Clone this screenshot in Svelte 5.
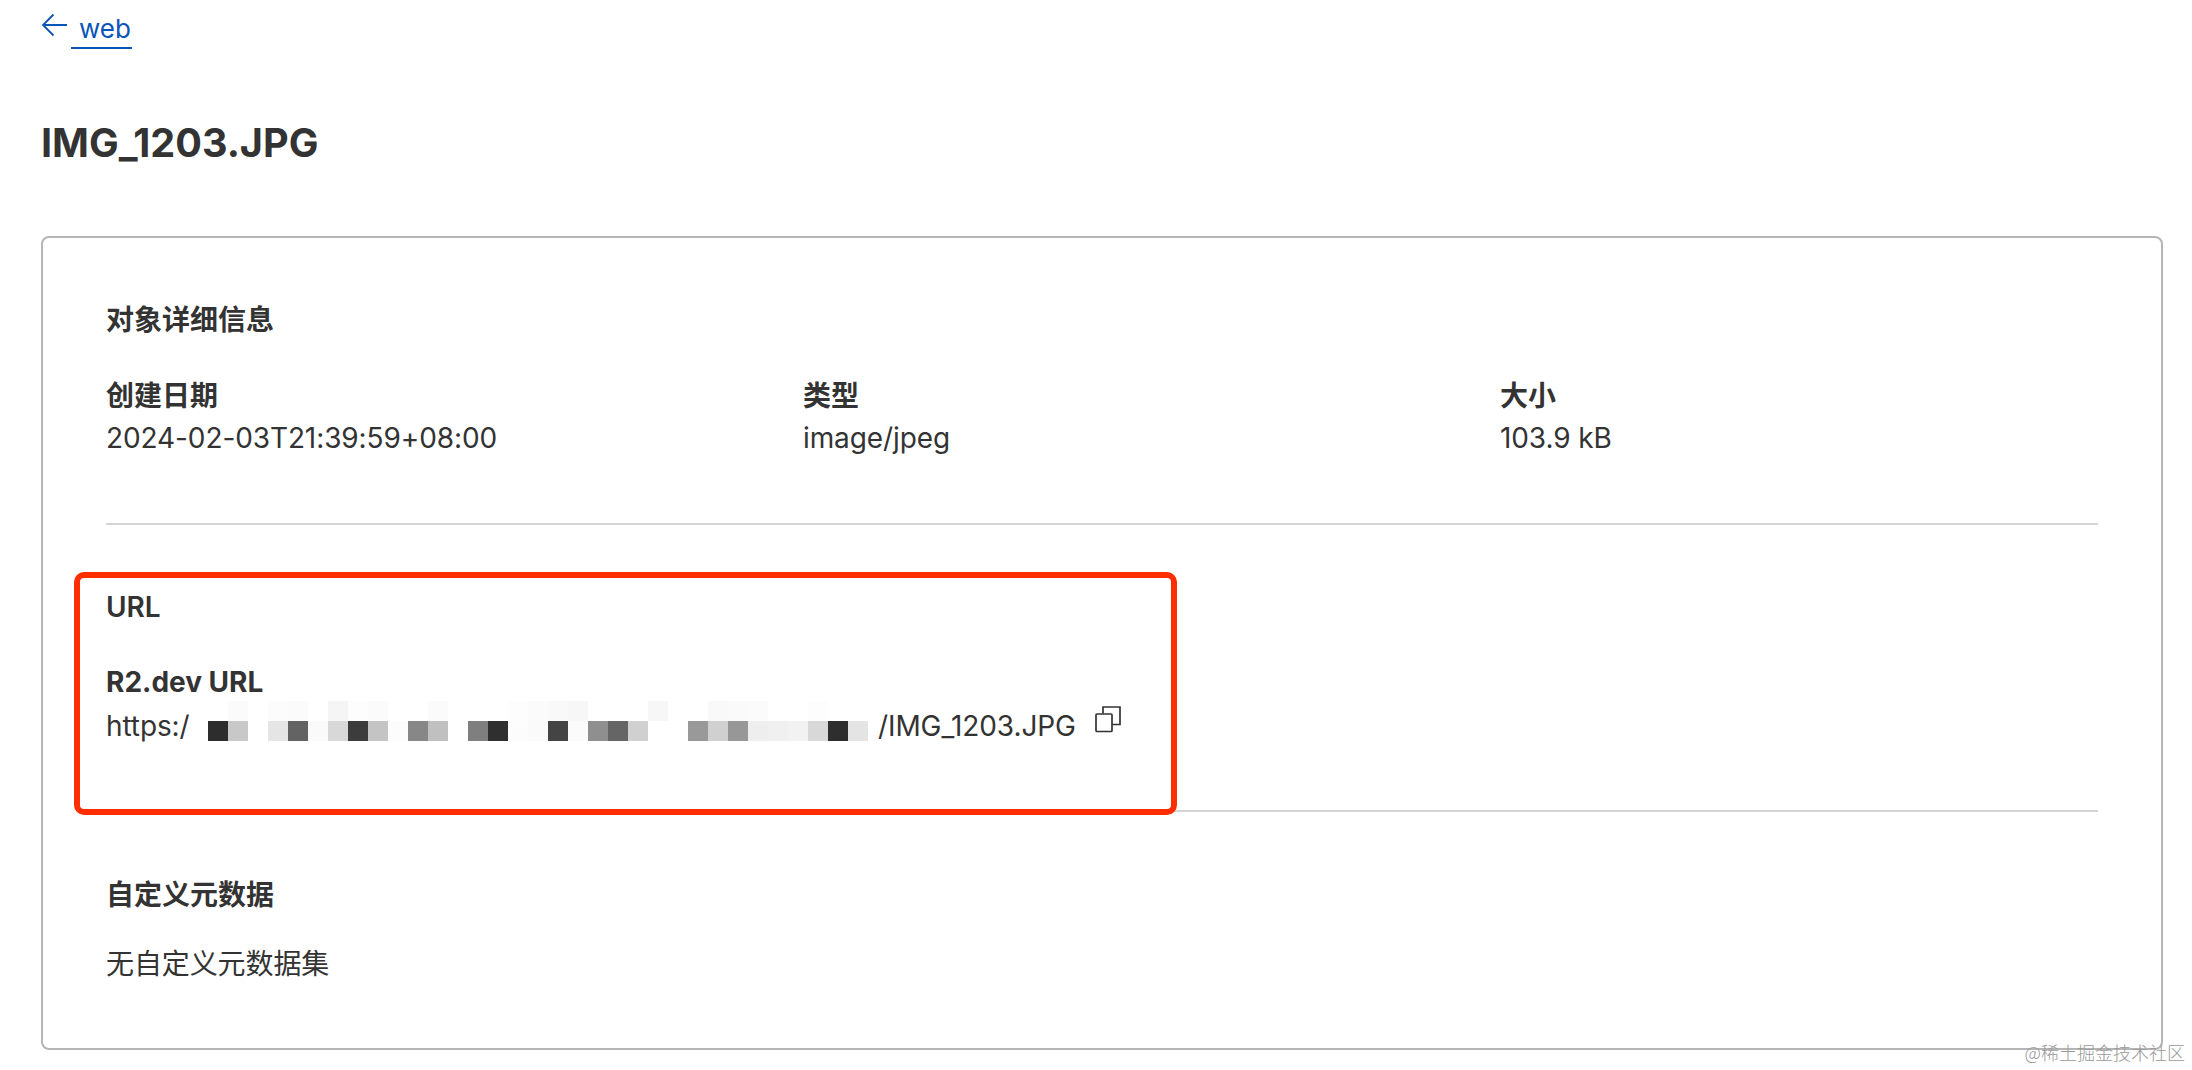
<script>
  // mosaic cells that hide the bucket host, one gray per 20px column
  const lower = ['#2d2d2d','#c8c8c8','#ffffff','#e5e5e5','#636363','#fafafa','#d8d8d8','#3c3c3c','#c4c4c4','#fcfcfc','#878787','#c0c0c0','#ffffff','#7f7f7f','#2f2f2f','#fcfcfc','#fafafa','#444444','#fbfbfb','#8f8f8f','#656565','#d0d0d0','#ffffff','#ffffff','#999999','#d0d0d0','#979797','#eeeeee','#f0f0f0','#f2f2f2','#d8d8d8','#2e2e2e','#e4e4e4'];
  const upper = ['#ffffff','#fbfbfb','#ffffff','#fcfcfc','#fbfbfb','#ffffff','#f5f5f5','#fdfdfd','#fbfbfb','#ffffff','#ffffff','#fbfbfb','#ffffff','#ffffff','#ffffff','#fdfdfd','#fbfbfb','#f9f9f9','#f7f7f7','#ffffff','#ffffff','#ffffff','#f7f7f7','#ffffff','#ffffff','#f9f9f9','#fafafa','#fbfbfb','#ffffff','#ffffff','#fdfdfd','#ffffff','#ffffff'];
</script>

<div class="page">
  <a class="back" href="#top">
    <svg class="arrow" width="27" height="24" viewBox="0 0 27 24" fill="none" stroke="currentColor" stroke-width="1.8">
      <path d="M26 12H2M12.500 1.500L2 12l10.500 10.500" />
    </svg>
    <span class="back-label"> web</span>
  </a>

  <h1>IMG_1203.JPG</h1>

  <div class="card">
    <section class="details">
      <h2>对象详细信息</h2>
      <div class="cols">
        <div>
          <div class="label">创建日期</div>
          <div class="value">2024-02-03T21:39:59+08:00</div>
        </div>
        <div>
          <div class="label">类型</div>
          <div class="value">image/jpeg</div>
        </div>
        <div>
          <div class="label">大小</div>
          <div class="value">103.9 kB</div>
        </div>
      </div>
    </section>

    <hr />

    <section class="url">
      <h2>URL</h2>
      <div class="label strong">R2.dev URL</div>
      <div class="value link-row">
        <span class="scheme">https:/</span>
        <span class="mosaic">
          <span class="row">
            {#each upper as c}<i style="background:{c}"></i>{/each}
          </span>
          <span class="row">
            {#each lower as c}<i style="background:{c}"></i>{/each}
          </span>
        </span>
        <span class="file">/IMG_1203.JPG</span>
        <svg class="copy" width="26" height="27" viewBox="0 0 26 27" fill="none" stroke="#333" stroke-width="1.700">
          <rect x="1" y="8" width="16" height="17.500" rx="1" />
          <path d="M8 7.500V1h17v17.500h-7.500" />
        </svg>
      </div>
      <div class="callout"></div>
    </section>

    <hr />

    <section class="meta">
      <h2>自定义元数据</h2>
      <div class="value">无自定义元数据集</div>
    </section>
  </div>

  <div class="watermark">@稀土掘金技术社区</div>
</div>

<style>
  :global(body) {
    margin: 0;
    background: #fff;
  }

  .page {
    position: relative;
    height: 1070px;
    box-sizing: border-box;
    padding: 0 29px 0 41px;
    overflow: hidden;
    color: #333;
    font-family: Inter, "Noto Sans CJK SC", sans-serif;
  }

  .back {
    display: flex;
    align-items: center;
    height: 50px;
    color: #0b55b8;
    text-decoration: none;
    font-size: 26px;
  }

  .back-label {
    margin-left: 3px;
    padding: 0 1px 0 8px;
    height: 46px;
    line-height: 56px;
    border-bottom: 2px solid #0b55b8;
  }

  h1 {
    margin: 0;
    padding-top: 70px;
    height: 116px;
    font-size: 39.6px;
    line-height: 46px;
    font-weight: 700;
  }

  .card {
    box-sizing: border-box;
    height: 814px;
    padding: 0 63px;
    border: 2px solid #b5b5b5;
    border-radius: 8px;
  }

  h2 {
    margin: 0;
    font-size: 28px;
    line-height: 34px;
    font-weight: 600;
  }

  .label {
    font-size: 28px;
    line-height: 34px;
    font-weight: 600;
  }

  .value {
    font-size: 28px;
    line-height: 34px;
    font-weight: 400;
    letter-spacing: -0.1px;
  }

  section { position: relative; }

  .details {
    box-sizing: border-box;
    height: 285px;
    padding-top: 65px;
  }

  .cols {
    display: grid;
    grid-template-columns: repeat(3, 697px);
    margin-top: 42px;
  }

  .cols .value { margin-top: 8px; }

  hr {
    margin: 0;
    border: none;
    border-top: 2px solid #d4d4d4;
  }

  .url {
    box-sizing: border-box;
    height: 285px;
    padding-top: 65px;
  }

  .strong {
    margin-top: 41px;
    font-weight: 700;
  }

  .link-row {
    display: flex;
    align-items: center;
    margin-top: 10px;
    height: 34px;
  }

  .scheme { width: 102px; flex: none; }

  .mosaic {
    display: flex;
    flex-direction: column;
    flex: none;
    margin-top: -10px;
    width: 660px;
  }

  .row { display: flex; }

  .row i {
    flex: none;
    width: 20px;
    height: 20px;
  }

  .file { margin-left: 10px; }

  .copy {
    flex: none;
    margin: -14px 0 0 19px;
  }

  .callout {
    position: absolute;
    left: -32px;
    top: 47px;
    width: 1103px;
    height: 243px;
    box-sizing: border-box;
    border: 6px solid #ff2d00;
    border-radius: 10px;
    pointer-events: none;
  }

  .meta {
    padding-top: 66px;
  }

  .meta .value { margin-top: 35px; }

  .watermark {
    position: absolute;
    right: 7px;
    bottom: 6px;
    font-family: "Noto Sans CJK SC", sans-serif;
    font-weight: 300;
    font-size: 18px;
    line-height: 24px;
    color: #999;
  }
</style>
